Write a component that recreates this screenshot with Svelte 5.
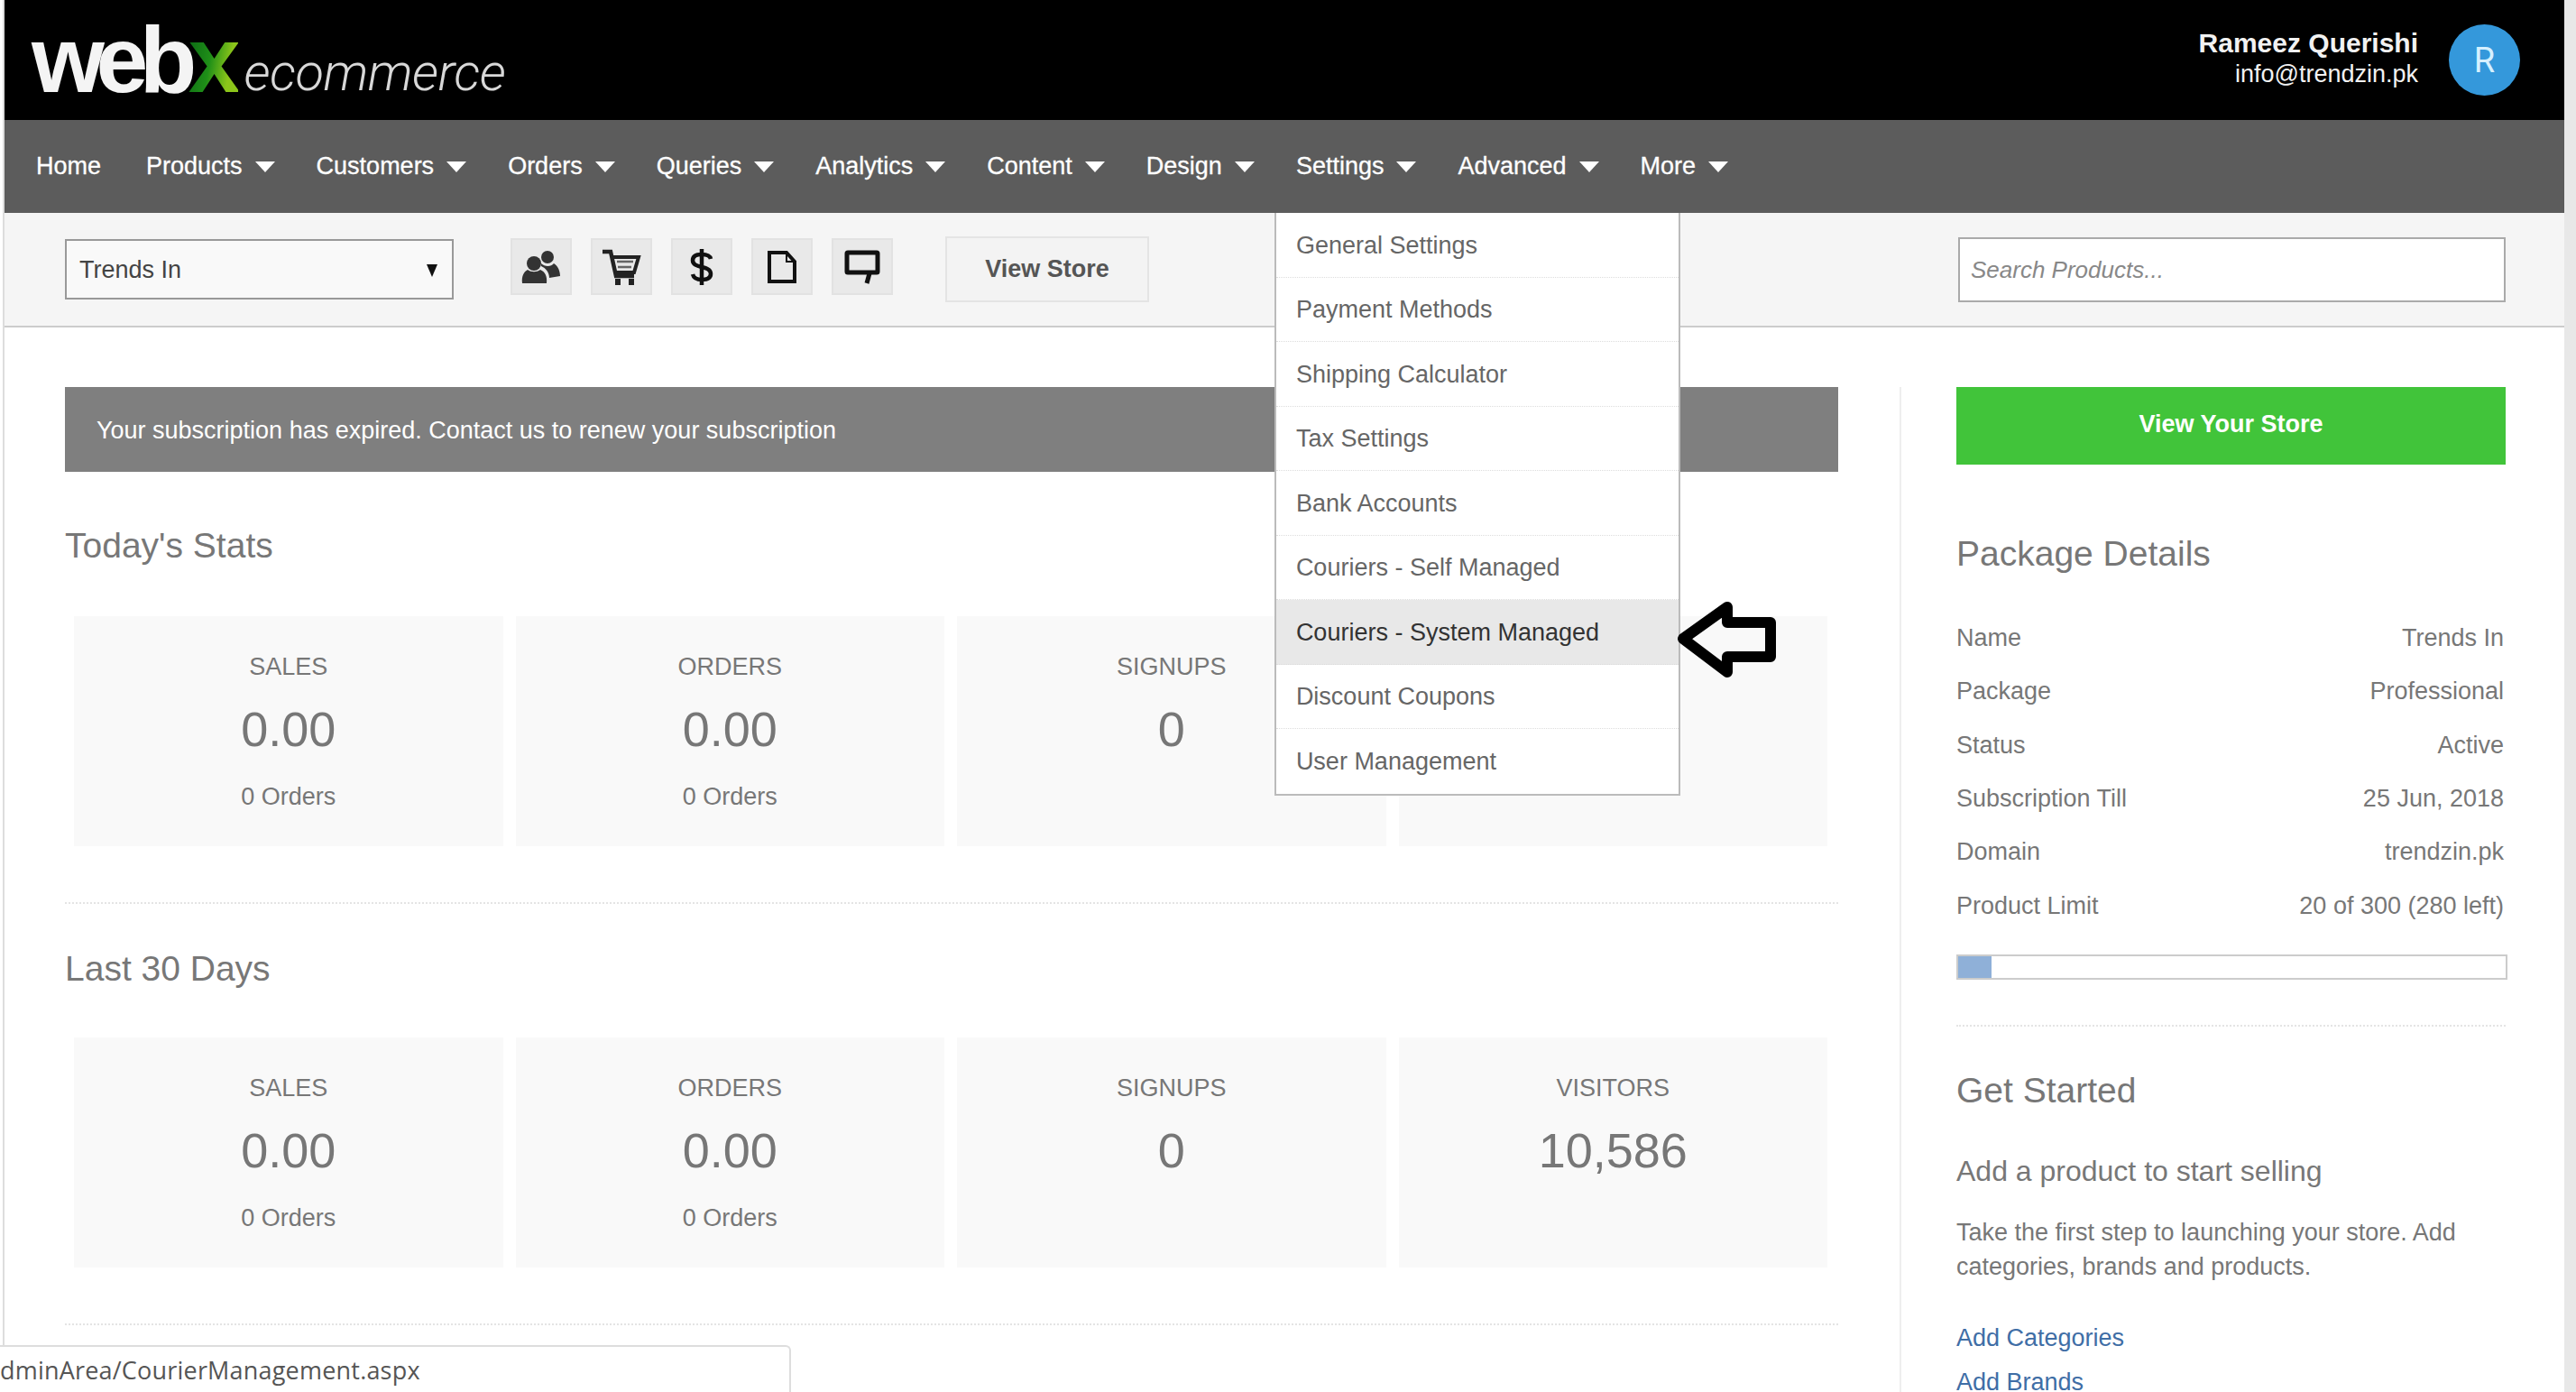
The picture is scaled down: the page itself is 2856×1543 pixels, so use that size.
<script>
	const navItems = ["Products", "Customers", "Orders", "Queries", "Analytics", "Content", "Design", "Settings", "Advanced", "More"];
	const settingsMenu = [
		"General Settings",
		"Payment Methods",
		"Shipping Calculator",
		"Tax Settings",
		"Bank Accounts",
		"Couriers - Self Managed",
		"Couriers - System Managed",
		"Discount Coupons",
		"User Management",
	];
	const today = [
		{ label: "SALES", value: "0.00", sub: "0 Orders" },
		{ label: "ORDERS", value: "0.00", sub: "0 Orders" },
		{ label: "SIGNUPS", value: "0" },
		{ label: "VISITORS", value: "0" },
	];
	const month = [
		{ label: "SALES", value: "0.00", sub: "0 Orders" },
		{ label: "ORDERS", value: "0.00", sub: "0 Orders" },
		{ label: "SIGNUPS", value: "0" },
		{ label: "VISITORS", value: "10,586" },
	];
	const packageRows = [
		["Name", "Trends In"],
		["Package", "Professional"],
		["Status", "Active"],
		["Subscription Till", "25 Jun, 2018"],
		["Domain", "trendzin.pk"],
		["Product Limit", "20 of 300 (280 left)"],
	];
</script>

{#snippet statRow(stats)}
	<div class="stats">
		{#each stats as s}
			<div class="stat">
				<div class="stat-label">{s.label}</div>
				<div class="stat-value">{s.value}</div>
				{#if s.sub}<div class="stat-sub">{s.sub}</div>{/if}
			</div>
		{/each}
	</div>
{/snippet}

<div class="window">
	<div class="page">
		<header>
			<div class="logo">
				<span class="web">web</span><span class="x">x</span><span class="ecommerce">ecommerce</span>
			</div>
			<div class="user">
				<div class="user-text">
					<div class="user-name">Rameez Querishi</div>
					<div class="user-mail">info@trendzin.pk</div>
				</div>
				<div class="avatar">R</div>
			</div>
		</header>

		<nav>
			<ul>
				<li class="home">Home</li>
				{#each navItems as item}
					<li>
						{item}<i class="caret"></i>
						{#if item === "Settings"}
							<div class="menu">
								{#each settingsMenu as m, i}
									<div class="menu-item" class:active={i === 6}>{m}</div>
								{/each}
							</div>
						{/if}
					</li>
				{/each}
			</ul>
		</nav>

		<div class="toolbar">
			<div class="select">Trends In<i class="select-arrow"></i></div>
			<div class="tools">
				<button class="tool" aria-label="Customers">
					<svg width="44" height="38" viewBox="0 0 44 38" fill="#333">
						<circle cx="29" cy="8" r="7" />
						<path d="M22 15c4 4 11 4 14 0 5 3 7 9 7 14l-12 2c0-6-4-11-9-13z" />
						<circle cx="14" cy="15" r="8" />
						<path d="M1 37c-1-8 2-13 6-15 4 3 10 3 14 0 5 2 8 7 7 15z" />
					</svg>
				</button>
				<button class="tool" aria-label="Orders">
					<svg width="44" height="40" viewBox="0 0 44 40" fill="none" stroke="#222">
						<path d="M1 3h9l6 27h20" stroke-width="4.500" />
						<path d="M12 9h29l-5 17H17" stroke-width="4" />
						<path d="M17 14h18M18 20h15" stroke-width="2.500" stroke="#666" />
						<rect x="15" y="33" width="6" height="7" fill="#222" stroke="none" />
						<rect x="30" y="33" width="6" height="7" fill="#222" stroke="none" />
					</svg>
				</button>
				<button class="tool" aria-label="Sales">
					<svg width="26" height="42" viewBox="0 0 26 42" fill="none" stroke="#111" stroke-width="4.500">
						<path d="M23 12c-1-4-5-5-10-5C7 7 3 9 3 13.500c0 10 20 5 20 15 0 4.500-4 6.500-10 6.500-5 0-9-2-10-6" />
						<path d="M13 1v40" />
					</svg>
				</button>
				<button class="tool" aria-label="Pages">
					<svg width="32" height="36" viewBox="0 0 32 36" fill="none" stroke="#111" stroke-width="4">
						<path d="M2 2h19l9 10v22H2z" />
						<path d="M21 2v10h9" stroke-width="2" />
					</svg>
				</button>
				<button class="tool" aria-label="Comments">
					<svg width="40" height="38" viewBox="0 0 40 38" fill="none" stroke="#111" stroke-width="5">
						<path d="M4 3h32a1 1 0 0 1 1 1v20a1 1 0 0 1-1 1H4a1 1 0 0 1-1-1V4a1 1 0 0 1 1-1z" />
						<path d="M28 26l-3 11" />
					</svg>
				</button>
			</div>
			<button class="view-store">View Store</button>
			<input class="search" type="text" placeholder="Search Products..." />
		</div>

		<div class="content">
			<main>
				<div class="alert">Your subscription has expired. Contact us to renew your subscription</div>

				<h2 class="stats-title">Today's Stats</h2>
				{@render statRow(today)}
				<hr class="dots first" />

				<h2 class="stats-title second">Last 30 Days</h2>
				<div class="second-row">{@render statRow(month)}</div>
				<hr class="dots first" />
			</main>

			<aside>
				<button class="view-your-store">View Your Store</button>

				<h2 class="package-title">Package Details</h2>
				<div class="package">
					{#each packageRows as row}
						<div class="package-row">
							<span>{row[0]}</span>
							<span>{row[1]}</span>
						</div>
					{/each}
				</div>
				<div class="progress"><div class="progress-fill" style="width: {(20 / 300) * 100 - 0.6}%"></div></div>
				<hr class="dots side" />

				<h2 class="started">Get Started</h2>
				<h3>Add a product to start selling</h3>
				<p>Take the first step to launching your store. Add categories, brands and products.</p>
				<a href="#categories">Add Categories</a>
				<a href="#brands">Add Brands</a>
			</aside>
		</div>

		<!-- hand drawn arrow pasted on the screenshot -->
		<svg class="arrow" width="112" height="90" viewBox="0 0 112 90" fill="none" stroke="#000" stroke-width="12" stroke-linejoin="round">
			<path d="M7 44L56 9v17h48v38H56v17z" />
		</svg>
	</div>
	<div class="track"></div>

	<div class="status">dminArea/CourierManagement.aspx</div>
</div>

<style>
	:global(body) {
		margin: 0;
		background: #fff;
	}

	.window {
		display: flex;
		width: 2856px;
		height: 1543px;
		overflow: hidden;
		position: relative;
		padding-left: 3px;
		box-sizing: border-box;
		font-family: "Liberation Sans", Arial, sans-serif;
		font-size: 27px;
		color: #777;
	}

	.page {
		width: 2840px;
		flex: none;
		position: relative;
		border-left: 2px solid #ddd;
		box-sizing: border-box;
	}

	.track {
		flex: 1;
		background: #e8e8e8;
	}

	header {
		height: 133px;
		background: #000;
		display: flex;
		justify-content: space-between;
		align-items: center;
	}

	.logo {
		display: flex;
		align-items: baseline;
		margin-left: 30px;
		height: 133px;
		line-height: 133px;
	}

	.web {
		font-size: 104px;
		font-weight: 700;
		letter-spacing: -9.5px;
		color: #f4f4f4;
	}

	.x {
		font-size: 104px;
		font-weight: 700;
		letter-spacing: -3px;
		background: linear-gradient(100deg, #0c6a14 10%, #1f8f18 45%, #8cc51a 75%);
		-webkit-background-clip: text;
		background-clip: text;
		color: transparent;
	}

	.ecommerce {
		font-family: Roboto, sans-serif;
		font-weight: 300;
		font-style: italic;
		font-size: 58px;
		letter-spacing: -0.6px;
		color: #d8d8d8;
		margin-left: 7px;
		position: relative;
		top: -2px;
	}

	.user {
		display: flex;
		align-items: center;
		gap: 34px;
		margin-right: 49px;
	}

	.user-text {
		text-align: right;
		color: #f2f2f2;
		margin-top: -6px;
	}

	.user-name {
		font-size: 30px;
		font-weight: 700;
		line-height: 36px;
	}

	.user-mail {
		line-height: 32px;
	}

	.avatar {
		width: 79px;
		height: 79px;
		border-radius: 50%;
		background: #3498db;
		color: #d6f0ff;
		font-family: Roboto, sans-serif;
		font-size: 38px;
		display: flex;
		align-items: center;
		justify-content: center;
	}

	nav {
		height: 103px;
		background: #5c5c5c;
		color: #fff;
		-webkit-text-stroke: 0.3px #fff;
	}

	nav ul {
		list-style: none;
		margin: 0;
		padding: 0 0 0 35px;
		height: 100%;
		display: flex;
		gap: 46px;
	}

	nav li {
		position: relative;
		display: flex;
		align-items: center;
		gap: 14px;
	}

	nav li.home {
		margin-right: 4px;
	}

	.caret {
		width: 0;
		height: 0;
		border-left: 11px solid transparent;
		border-right: 11px solid transparent;
		border-top: 12px solid #fff;
	}

	.menu {
		position: absolute;
		top: 100%;
		left: -24px;
		width: 450px;
		background: #fff;
		border: 2px solid #bbb;
		border-top: none;
		box-sizing: border-box;
		z-index: 3;
		color: #666;
		-webkit-text-stroke: 0;
	}

	.menu-item {
		height: 71.500px;
		box-sizing: border-box;
		padding: 2px 0 0 22px;
		display: flex;
		align-items: center;
		border-bottom: 1px dotted #ddd;
		white-space: nowrap;
	}

	.menu-item:last-child {
		border-bottom: none;
	}

	.menu-item.active {
		background: #e8e8e8;
		color: #333;
	}

	.toolbar {
		height: 127px;
		box-sizing: border-box;
		background: #f5f5f5;
		border-bottom: 2px solid #ccc;
		padding: 0 65px 0 67px;
		display: flex;
		align-items: center;
	}

	.select {
		width: 431px;
		height: 67px;
		box-sizing: border-box;
		border: 2px solid #999;
		background: #f9f9f9;
		color: #444;
		padding: 2px 14px 0;
		display: flex;
		align-items: center;
		justify-content: space-between;
	}

	.select-arrow {
		width: 0;
		height: 0;
		border-left: 6px solid transparent;
		border-right: 6px solid transparent;
		border-top: 14px solid #111;
		margin-right: 2px;
	}

	.tools {
		display: flex;
		gap: 21px;
		margin: -6px 0 0 63px;
	}

	.tool {
		width: 68px;
		height: 63px;
		padding: 0;
		border: 2px solid #e2e2e2;
		background: #e9e9e9;
		display: flex;
		align-items: center;
		justify-content: center;
	}

	.view-store {
		width: 226px;
		height: 73px;
		margin-left: 58px;
		border: 2px solid #e4e4e4;
		background: #f3f3f3;
		color: #555;
		font: 700 27px "Liberation Sans", Arial, sans-serif;
	}

	.search {
		margin-left: auto;
		width: 607px;
		height: 72px;
		box-sizing: border-box;
		border: 2px solid #aaa;
		background: #fff;
		padding: 2px 12px 0;
		font: italic 26px "Liberation Sans", Arial, sans-serif;
		outline: none;
	}

	.search::placeholder {
		color: #888;
	}

	.content {
		display: grid;
		grid-template-columns: 1966px 1fr;
		padding: 66px 0 0 67px;
	}

	h2 {
		font-size: 39px;
		font-weight: 400;
		line-height: 46px;
		margin: 0;
		color: #777;
	}

	.alert {
		height: 94px;
		box-sizing: border-box;
		background: #7f7f7f;
		color: #fff;
		padding: 2px 0 0 35px;
		display: flex;
		align-items: center;
	}

	.stats-title {
		margin-top: 59px;
	}

	.stats-title.second {
		margin-top: 49px;
	}

	.stats {
		margin: 55px 12px 0 10px;
		display: grid;
		grid-template-columns: repeat(4, 1fr);
		gap: 14px;
	}

	.second-row {
		margin-top: -2px;
	}

	.stat {
		height: 255px;
		box-sizing: border-box;
		background: #f9f9f9;
		padding-top: 41px;
		text-align: center;
	}

	.stat-label {
		line-height: 30px;
	}

	.stat-value {
		font-size: 54px;
		line-height: 60px;
		margin-top: 24px;
	}

	.stat-sub {
		line-height: 30px;
		margin-top: 30px;
	}

	.dots {
		border: none;
		border-top: 2px dotted #e4e4e4;
		margin: 0;
	}

	.dots.first {
		margin-top: 62px;
	}

	.dots.side {
		margin-top: 50px;
		width: 609px;
	}

	aside {
		margin-left: 68px;
		border-left: 2px solid #eee;
		padding-left: 61px;
		width: 612px;
		height: 1200px;
	}

	.view-your-store {
		display: block;
		width: 609px;
		height: 86px;
		border: none;
		background: #41c43a;
		color: #fff;
		font: 700 27px "Liberation Sans", Arial, sans-serif;
		padding-bottom: 4px;
	}

	.package-title {
		margin-top: 76px;
	}

	.package {
		margin-top: 41px;
		width: 607px;
	}

	.package-row {
		height: 59.300px;
		display: flex;
		justify-content: space-between;
		align-items: center;
	}

	.progress {
		margin-top: 24px;
		height: 28px;
		width: 611px;
		box-sizing: border-box;
		border: 2px solid #ccc;
		background: #fff;
	}

	.progress-fill {
		height: 100%;
		background: #8fb0d8;
	}

	.started {
		margin-top: 48px;
	}

	h3 {
		font-size: 32px;
		font-weight: 400;
		line-height: 40px;
		margin: 46px 0 0;
		color: #777;
	}

	p {
		line-height: 38px;
		margin: 29px 0 41px;
		width: 609px;
	}

	a {
		display: block;
		line-height: 38px;
		margin-bottom: 11px;
		color: #3f6ea6;
		text-decoration: none;
	}

	.arrow {
		position: absolute;
		left: 1854px;
		top: 664px;
		z-index: 4;
	}

	.status {
		position: absolute;
		left: 0;
		bottom: 0;
		width: 877px;
		height: 52px;
		box-sizing: border-box;
		background: #fff;
		border: 2px solid #ddd;
		border-left: none;
		border-bottom: none;
		border-top-right-radius: 6px;
		font-family: "Open Sans", sans-serif;
		font-size: 27px;
		letter-spacing: 0.2px;
		color: #555;
		line-height: 52px;
		z-index: 5;
	}
</style>
